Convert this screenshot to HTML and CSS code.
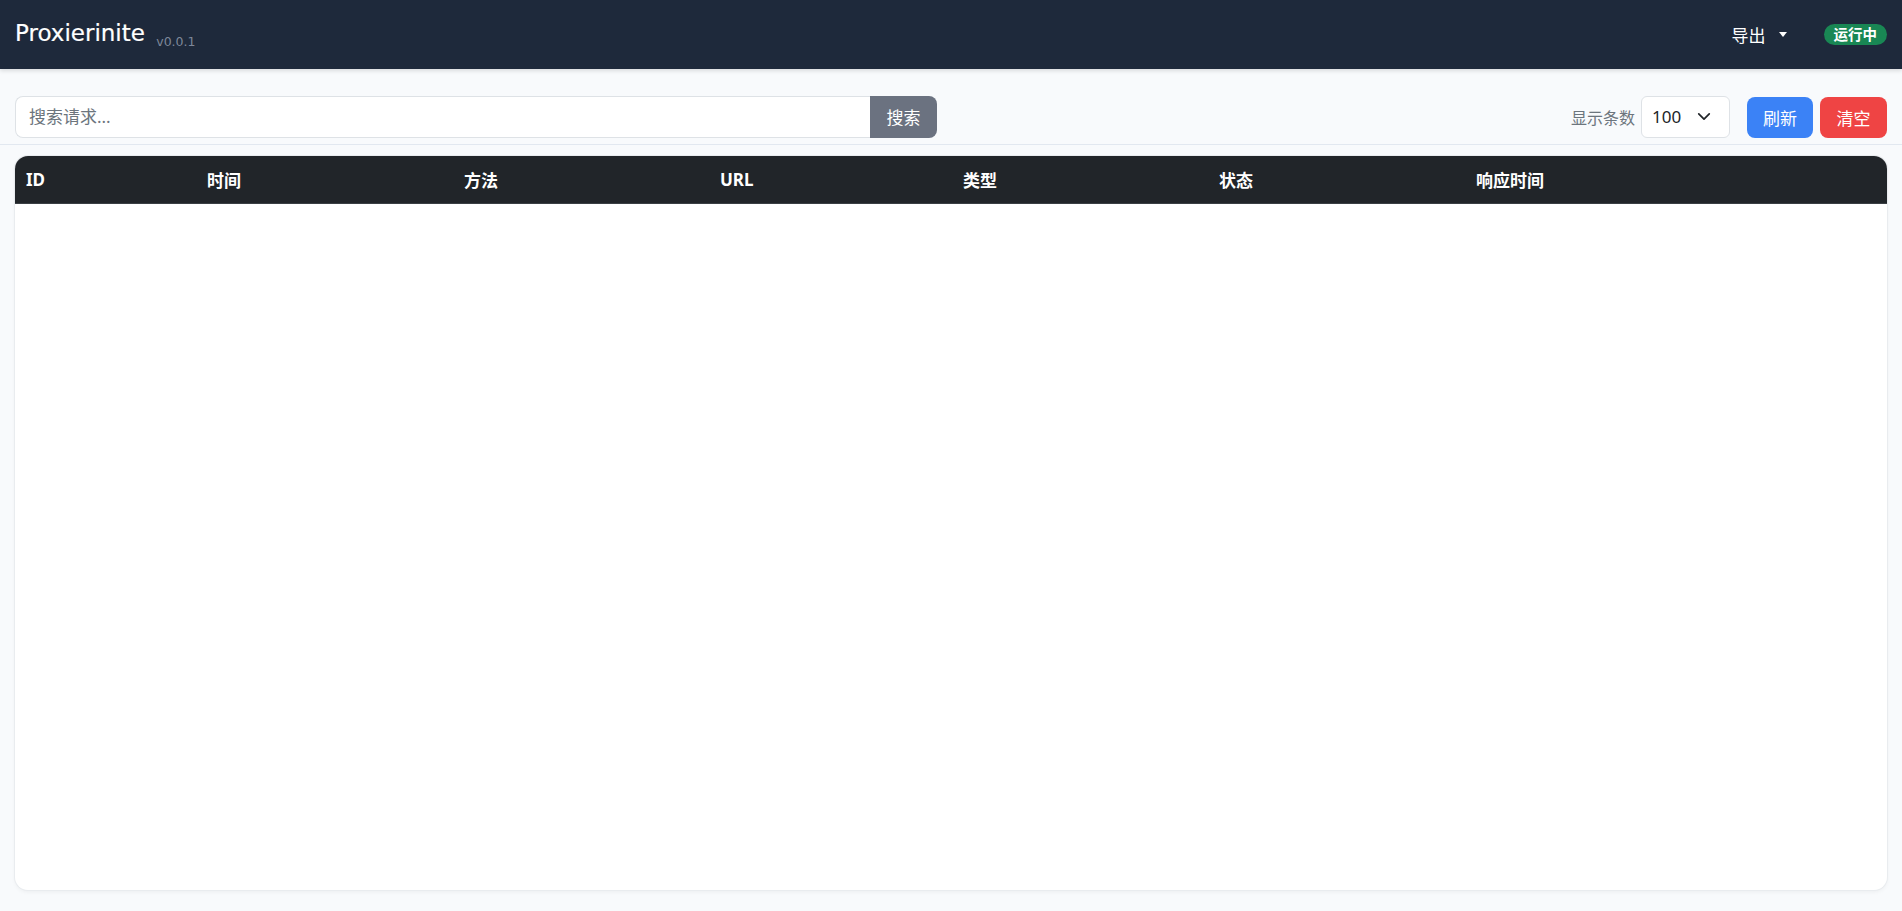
FILE: index.html
```html
<!DOCTYPE html>
<html lang="zh-CN">
<head>
  <meta charset="UTF-8">
  <meta name="viewport" content="width=device-width, initial-scale=1.0">
  <title>Proxierinite</title>
  <link rel="stylesheet" href="styles.css">
</head>
<body>
  <nav class="topbar">
    <div class="brand">Proxierinite <span class="version">v0.0.1</span></div>
    <div class="topbar-right">
      <button class="export-toggle" type="button">导出<span class="caret"></span></button>
      <span class="status-badge">运行中</span>
    </div>
  </nav>

  <div class="toolbar">
    <div class="search-group">
      <input class="search-input" type="text" placeholder="搜索请求...">
      <button class="btn btn-search" type="button">搜索</button>
    </div>
    <div class="toolbar-right">
      <label class="limit-label" for="limit">显示条数</label>
      <select class="limit-select" id="limit">
        <option>50</option>
        <option selected>100</option>
        <option>200</option>
        <option>500</option>
      </select>
      <button class="btn btn-refresh" type="button">刷新</button>
      <button class="btn btn-clear" type="button">清空</button>
    </div>
  </div>

  <main class="content">
    <div class="table-card">
      <table class="request-table">
        <colgroup>
          <col class="col-id">
          <col class="col-time">
          <col class="col-method">
          <col class="col-url">
          <col class="col-type">
          <col class="col-status">
          <col>
        </colgroup>
        <thead>
          <tr>
            <th>ID</th>
            <th>时间</th>
            <th>方法</th>
            <th>URL</th>
            <th>类型</th>
            <th>状态</th>
            <th>响应时间</th>
          </tr>
        </thead>
        <tbody id="requestRows"></tbody>
      </table>
    </div>
  </main>
</body>
</html>
```

FILE: styles.css
```css
* {
  margin: 0;
  padding: 0;
  box-sizing: border-box;
}

html, body {
  height: 100%;
}

body {
  display: flex;
  flex-direction: column;
  background: #f8fafc;
  color: #212529;
  font-family: "Noto Sans", "Noto Sans CJK SC", sans-serif;
  overflow: hidden;
}

/* top bar */
.topbar {
  flex-shrink: 0;
  height: 69px;
  padding: 0 15px;
  display: flex;
  align-items: center;
  justify-content: space-between;
  background: #1e293b;
  box-shadow: 0 2px 4px rgba(0, 0, 0, 0.12);
  position: relative;
  z-index: 1;
}

.brand {
  color: #fff;
  font-family: "DejaVu Sans", sans-serif;
  font-size: 23px;
  line-height: 1;
  margin-top: 1px;
  -webkit-text-stroke: 0.2px #fff;
}

.version {
  margin-left: 4px;
  font-size: 12.5px;
  color: #7d8799;
  vertical-align: -5px;
  -webkit-text-stroke: 0;
}

.topbar-right {
  display: flex;
  align-items: center;
  gap: 37px;
}

.export-toggle {
  display: flex;
  align-items: center;
  background: none;
  border: none;
  color: #fff;
  font-family: "Noto Sans", "Noto Sans CJK SC", sans-serif;
  font-size: 17px;
  cursor: pointer;
}

.caret {
  margin-left: 13px;
  width: 0;
  height: 0;
  border-top: 5px solid #fff;
  border-left: 4.5px solid transparent;
  border-right: 4.5px solid transparent;
}

.status-badge {
  background: #198754;
  color: #fff;
  font-size: 14.5px;
  font-weight: 700;
  line-height: 15px;
  padding: 3px 10px;
  border-radius: 11px;
}

/* toolbar */
.toolbar {
  flex-shrink: 0;
  padding: 26px 15px 6px;
  display: flex;
  align-items: center;
  justify-content: space-between;
  border-bottom: 1px solid #e2e8f0;
}

.search-group {
  display: flex;
  width: 922px;
}

.search-input {
  flex: 1;
  height: 42px;
  padding: 0 13px;
  border: 1px solid #dee2e6;
  border-right: none;
  border-radius: 8px 0 0 8px;
  background: #fff;
  font-family: "Noto Sans", "Noto Sans CJK SC", sans-serif;
  font-size: 17px;
  color: #212529;
  outline: none;
}

.search-input::placeholder {
  color: #6c757d;
}

.btn {
  height: 41px;
  padding: 0 16px;
  border: none;
  border-radius: 8px;
  color: #fff;
  font-family: "Noto Sans", "Noto Sans CJK SC", sans-serif;
  font-size: 17px;
  cursor: pointer;
}

.btn-search {
  height: 42px;
  width: 67px;
  background: #6b7280;
  border-radius: 0 8px 8px 0;
}

.toolbar-right {
  display: flex;
  align-items: center;
}

.limit-label {
  font-size: 16px;
  color: #6c757d;
  margin-right: 6px;
}

.limit-select {
  appearance: none;
  -webkit-appearance: none;
  width: 89px;
  height: 42px;
  padding: 0 10px;
  border: 1px solid #dee2e6;
  border-radius: 6px;
  background: #fff url("data:image/svg+xml,%3Csvg xmlns='http://www.w3.org/2000/svg' viewBox='0 0 16 10'%3E%3Cpath d='M2 2l6 6 6-6' fill='none' stroke='%23212529' stroke-width='2' stroke-linecap='round' stroke-linejoin='round'/%3E%3C/svg%3E") no-repeat right 18px center / 14px 9px;
  font-family: "Noto Sans", "Noto Sans CJK SC", sans-serif;
  font-size: 17px;
  color: #212529;
  margin-right: 17px;
}

.btn-refresh {
  width: 66px;
  background: #3b82f6;
  margin-right: 7px;
  margin-top: 2px;
}

.btn-clear {
  width: 67px;
  background: #ef4444;
  margin-top: 2px;
}

/* request table */
.content {
  flex: 1;
  display: flex;
  padding: 11px 15px 21px;
  min-height: 0;
}

.table-card {
  flex: 1;
  background: #fff;
  border-radius: 13px;
  overflow: hidden;
  box-shadow: 0 0 0 1px #e9ecef, 0 2px 4px rgba(0, 0, 0, 0.05);
}

.request-table {
  width: 100%;
  border-collapse: collapse;
  table-layout: fixed;
}

.col-id { width: 181px; }
.col-time { width: 257px; }
.col-method { width: 256px; }
.col-url { width: 243px; }
.col-type { width: 256px; }
.col-status { width: 257px; }

.request-table th {
  height: 47px;
  padding: 0 11px;
  background: #212529;
  color: #fff;
  font-size: 17px;
  font-weight: 700;
  text-align: left;
  border-bottom: 1px solid #3a3f44;
}
```
